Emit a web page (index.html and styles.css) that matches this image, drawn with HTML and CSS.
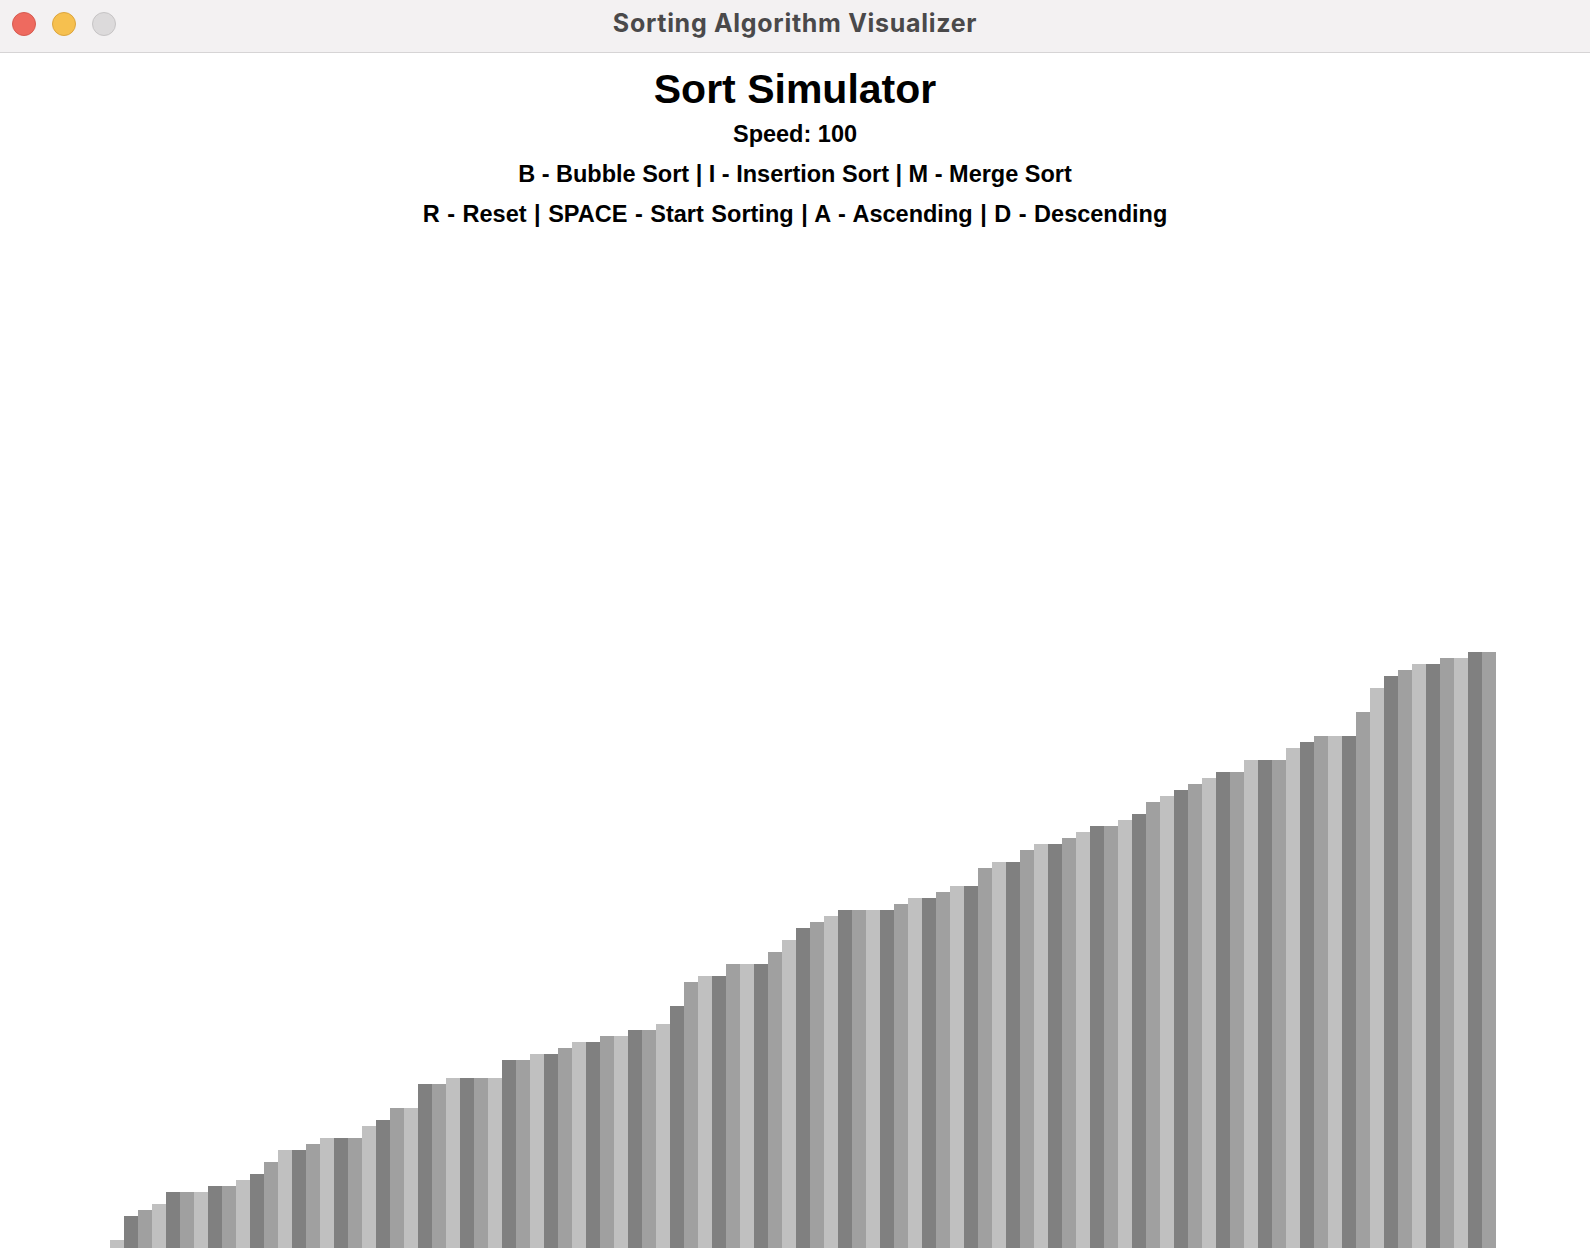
FILE: index.html
```html
<!DOCTYPE html>
<html lang="en">
<head>
<meta charset="utf-8">
<title>Sorting Algorithm Visualizer</title>
<link rel="stylesheet" href="styles.css">
</head>
<body>
<div class="window">
  <header class="titlebar">
    <div class="lights">
      <span class="light red"></span>
      <span class="light yellow"></span>
      <span class="light gray"></span>
    </div>
    <div class="wintitle">Sorting Algorithm Visualizer</div>
    <div></div>
  </header>
  <main class="content">
    <section class="info">
      <h1 class="title">Sort Simulator</h1>
      <div class="line speed">Speed: 100</div>
      <div class="line keys1">B - Bubble Sort | I - Insertion Sort | M - Merge Sort</div>
      <div class="line keys2">R - Reset | SPACE - Start Sorting | A - Ascending | D - Descending</div>
    </section>
    <section class="chart">
      <div class="bar" style="height:8px"></div>
      <div class="bar" style="height:32px"></div>
      <div class="bar" style="height:38px"></div>
      <div class="bar" style="height:44px"></div>
      <div class="bar" style="height:56px"></div>
      <div class="bar" style="height:56px"></div>
      <div class="bar" style="height:56px"></div>
      <div class="bar" style="height:62px"></div>
      <div class="bar" style="height:62px"></div>
      <div class="bar" style="height:68px"></div>
      <div class="bar" style="height:74px"></div>
      <div class="bar" style="height:86px"></div>
      <div class="bar" style="height:98px"></div>
      <div class="bar" style="height:98px"></div>
      <div class="bar" style="height:104px"></div>
      <div class="bar" style="height:110px"></div>
      <div class="bar" style="height:110px"></div>
      <div class="bar" style="height:110px"></div>
      <div class="bar" style="height:122px"></div>
      <div class="bar" style="height:128px"></div>
      <div class="bar" style="height:140px"></div>
      <div class="bar" style="height:140px"></div>
      <div class="bar" style="height:164px"></div>
      <div class="bar" style="height:164px"></div>
      <div class="bar" style="height:170px"></div>
      <div class="bar" style="height:170px"></div>
      <div class="bar" style="height:170px"></div>
      <div class="bar" style="height:170px"></div>
      <div class="bar" style="height:188px"></div>
      <div class="bar" style="height:188px"></div>
      <div class="bar" style="height:194px"></div>
      <div class="bar" style="height:194px"></div>
      <div class="bar" style="height:200px"></div>
      <div class="bar" style="height:206px"></div>
      <div class="bar" style="height:206px"></div>
      <div class="bar" style="height:212px"></div>
      <div class="bar" style="height:212px"></div>
      <div class="bar" style="height:218px"></div>
      <div class="bar" style="height:218px"></div>
      <div class="bar" style="height:224px"></div>
      <div class="bar" style="height:242px"></div>
      <div class="bar" style="height:266px"></div>
      <div class="bar" style="height:272px"></div>
      <div class="bar" style="height:272px"></div>
      <div class="bar" style="height:284px"></div>
      <div class="bar" style="height:284px"></div>
      <div class="bar" style="height:284px"></div>
      <div class="bar" style="height:296px"></div>
      <div class="bar" style="height:308px"></div>
      <div class="bar" style="height:320px"></div>
      <div class="bar" style="height:326px"></div>
      <div class="bar" style="height:332px"></div>
      <div class="bar" style="height:338px"></div>
      <div class="bar" style="height:338px"></div>
      <div class="bar" style="height:338px"></div>
      <div class="bar" style="height:338px"></div>
      <div class="bar" style="height:344px"></div>
      <div class="bar" style="height:350px"></div>
      <div class="bar" style="height:350px"></div>
      <div class="bar" style="height:356px"></div>
      <div class="bar" style="height:362px"></div>
      <div class="bar" style="height:362px"></div>
      <div class="bar" style="height:380px"></div>
      <div class="bar" style="height:386px"></div>
      <div class="bar" style="height:386px"></div>
      <div class="bar" style="height:398px"></div>
      <div class="bar" style="height:404px"></div>
      <div class="bar" style="height:404px"></div>
      <div class="bar" style="height:410px"></div>
      <div class="bar" style="height:416px"></div>
      <div class="bar" style="height:422px"></div>
      <div class="bar" style="height:422px"></div>
      <div class="bar" style="height:428px"></div>
      <div class="bar" style="height:434px"></div>
      <div class="bar" style="height:446px"></div>
      <div class="bar" style="height:452px"></div>
      <div class="bar" style="height:458px"></div>
      <div class="bar" style="height:464px"></div>
      <div class="bar" style="height:470px"></div>
      <div class="bar" style="height:476px"></div>
      <div class="bar" style="height:476px"></div>
      <div class="bar" style="height:488px"></div>
      <div class="bar" style="height:488px"></div>
      <div class="bar" style="height:488px"></div>
      <div class="bar" style="height:500px"></div>
      <div class="bar" style="height:506px"></div>
      <div class="bar" style="height:512px"></div>
      <div class="bar" style="height:512px"></div>
      <div class="bar" style="height:512px"></div>
      <div class="bar" style="height:536px"></div>
      <div class="bar" style="height:560px"></div>
      <div class="bar" style="height:572px"></div>
      <div class="bar" style="height:578px"></div>
      <div class="bar" style="height:584px"></div>
      <div class="bar" style="height:584px"></div>
      <div class="bar" style="height:590px"></div>
      <div class="bar" style="height:590px"></div>
      <div class="bar" style="height:596px"></div>
      <div class="bar" style="height:596px"></div>
    </section>
  </main>
</div>
</body>
</html>
```
FILE: styles.css
```css
* { box-sizing: border-box; }

html, body {
  margin: 0;
  padding: 0;
  background: #ffffff;
}

.window {
  height: 100vh;
  display: flex;
  flex-direction: column;
  overflow: hidden;
}

.titlebar {
  flex: 0 0 53px;
  display: grid;
  grid-template-columns: 1fr auto 1fr;
  align-items: start;
  background: #f3f1f2;
  border-bottom: 1px solid #d6d4d5;
}

.lights {
  display: flex;
  gap: 16px;
  padding: 12px 0 0 12px;
}

.light {
  width: 24px;
  height: 24px;
  border-radius: 50%;
  border: 1px solid transparent;
}

.light.red { background: #ee6a5f; border-color: #d65b50; }
.light.yellow { background: #f6c04f; border-color: #dca53e; }
.light.gray { background: #dcdadb; border-color: #c6c4c5; }

.wintitle {
  font-family: Inter, "Liberation Sans", sans-serif;
  font-weight: 700;
  font-size: 25px;
  line-height: 47px;
  letter-spacing: 0.7px;
  color: #4a494a;
  white-space: nowrap;
}

.content {
  flex: 1;
  display: flex;
  flex-direction: column;
  min-height: 0;
}

.info {
  display: flex;
  flex-direction: column;
  align-items: center;
  font-family: "Liberation Sans", Arial, sans-serif;
  font-weight: 700;
  color: #000;
}

.title {
  margin: 16px 0 0;
  font-size: 41px;
  line-height: 40px;
  font-weight: 700;
}

.line {
  font-size: 23.5px;
  line-height: 28px;
  white-space: nowrap;
}

.speed { margin-top: 11px; }
.keys1 { margin-top: 12px; }
.keys2 { margin-top: 12px; word-spacing: 1px; }

.chart {
  flex: 1;
  display: flex;
  align-items: flex-end;
  padding-left: 110px;
}

.bar {
  flex: 0 0 14px;
  width: 14px;
}

.bar:nth-child(3n+1) { background: #c0c0c0; }
.bar:nth-child(3n+2) { background: #808080; }
.bar:nth-child(3n) { background: #a0a0a0; }
```
